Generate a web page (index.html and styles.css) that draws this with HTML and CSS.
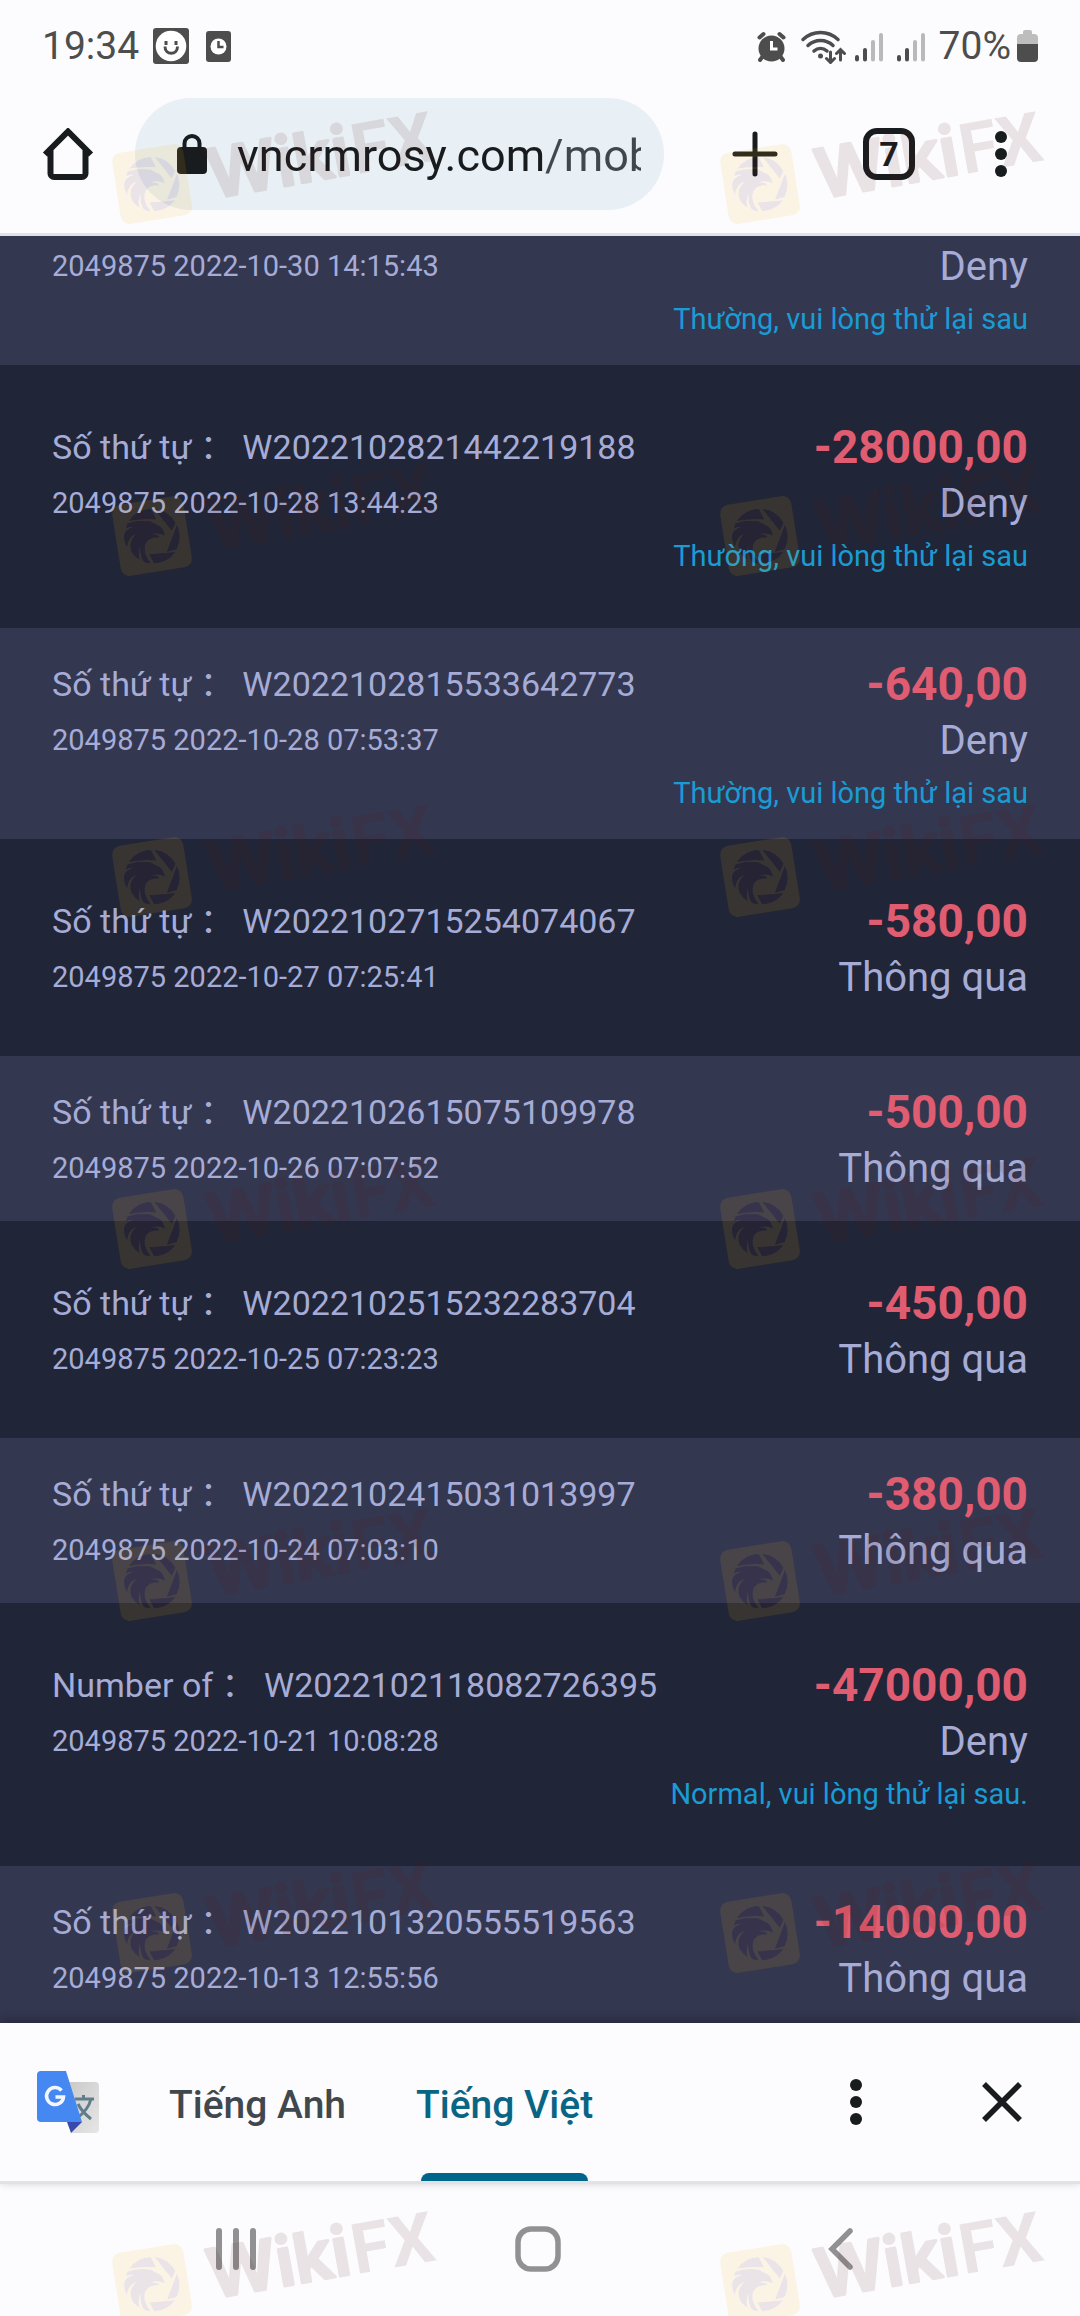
FILE: index.html
```html
<!DOCTYPE html>
<html lang="vi">
<head>
<meta charset="utf-8">
<meta name="viewport" content="width=device-width, initial-scale=1">
<title>vncrmrosy.com</title>
<link rel="stylesheet" href="styles.css">
</head>
<body>
<header class="browser">
  <div class="status-bar">
    <span class="clock">19:34</span>
    <svg class="smile-icon" width="36" height="36" viewBox="0 0 36 36" aria-hidden="true">
      <rect width="36" height="36" rx="3" fill="#4d4d4d"/>
      <circle cx="18" cy="18" r="15.3" fill="#fff"/>
      <path d="M13 13v4M23 13v4" stroke="#4d4d4d" stroke-width="3"/>
      <path d="M12 18.500c0 9 12.500 9 12.500 0" fill="none" stroke="#4d4d4d" stroke-width="3"/>
    </svg>
    <svg class="card-icon" width="25" height="31" viewBox="0 0 25 31" aria-hidden="true">
      <rect width="25" height="31" rx="3" fill="#4d4d4d"/>
      <circle cx="12.500" cy="15.500" r="8" fill="#fff"/>
      <path d="M12.500 10v6h5" fill="none" stroke="#4d4d4d" stroke-width="2.500"/>
    </svg>
    <svg class="system-icons" width="126" height="36" viewBox="0 0 126 36" aria-hidden="true">
      <g fill="none" stroke="#4d4d4d" stroke-width="4" stroke-linecap="round">
        <path d="M2.500 9.500l4-3.500M26.500 9.500l-4-3.500M6 28l-3 4M23 28l3 4"/>
      </g>
      <circle cx="14.500" cy="20.500" r="13" fill="#4d4d4d"/>
      <path d="M14.500 13v8h6" fill="none" stroke="#fff" stroke-width="3"/>
      <g fill="none" stroke="#4d4d4d" stroke-width="3.500" stroke-linecap="round">
        <path d="M46 11.500c10-9.300 25-9.300 35 0M51 17.500c7-6.700 18-6.700 25 0M57 23c4-3.500 9-3.500 13 0"/>
        <path stroke-width="3" d="M73.500 24v10M69.500 30.500l4 4 4-4M83.500 32v-10M79.500 25.500l4-4 4 4"/>
      </g>
      <circle cx="63.500" cy="28" r="2.500" fill="#4d4d4d"/>
      <g stroke-width="4" stroke-linecap="round">
        <path stroke="#4d4d4d" d="M100 29v2.500M108 22v9.500"/>
        <path stroke="#b9b9b9" d="M116 14v17.500M124 7v24.500"/>
      </g>
    </svg>
    <svg class="signal-icon" width="28" height="36" viewBox="98 0 28 36" aria-hidden="true">
      <g stroke-width="4" stroke-linecap="round">
        <path stroke="#4d4d4d" d="M100 29v2.500M108 22v9.500"/>
        <path stroke="#b9b9b9" d="M116 14v17.500M124 7v24.500"/>
      </g>
    </svg>
    <span class="battery-level">70%</span>
    <svg class="battery-icon" width="21" height="32" viewBox="0 0 21 32" aria-hidden="true">
      <path d="M6 2a2 2 0 0 1 2-2h5a2 2 0 0 1 2 2v2h2a4 4 0 0 1 4 4v6H0V8a4 4 0 0 1 4-4h2z" fill="#bdbdbd"/>
      <path d="M0 14h21v14a4 4 0 0 1-4 4H4a4 4 0 0 1-4-4z" fill="#4d4d4d"/>
    </svg>
  </div>
  <div class="toolbar">
    <button class="icon-button" type="button" aria-label="Home">
      <svg width="52" height="52" viewBox="0 0 52 52"><path d="M3 26.500L26 3.500l23 23M8.500 22v23.500a3.500 3.500 0 0 0 3.500 3.500h28a3.500 3.500 0 0 0 3.500-3.500V22" fill="none" stroke="#191c1e" stroke-width="6"/></svg>
    </button>
    <div class="address">
      <svg width="30" height="40" viewBox="0 0 30 40" aria-hidden="true"><rect y="13" width="30" height="27" rx="4" fill="#191c1e"/><path d="M7.500 15V9.500a7.500 7.500 0 0 1 15 0V15" fill="none" stroke="#191c1e" stroke-width="4"/></svg>
      <input class="address-input" type="text" aria-label="Address" value="vncrmrosy.com/mob">
    </div>
    <button class="icon-button new-tab" type="button" aria-label="New tab">
      <svg width="46" height="46" viewBox="0 0 46 46"><path d="M23 3v40M3 23h40" stroke="#191c1e" stroke-width="5" stroke-linecap="round"/></svg>
    </button>
    <button class="tab-count" type="button">7</button>
    <button class="icon-button" type="button" aria-label="Menu">
      <svg width="12" height="46" viewBox="0 0 12 46" fill="#191c1e"><circle cx="6" cy="6" r="6"/><circle cx="6" cy="23" r="6"/><circle cx="6" cy="40" r="6"/></svg>
    </button>
  </div>
</header>

<main class="page">
  <ul class="records">
    <li class="record record-cut">
      <div class="info"><span class="date">2049875 2022-10-30 14:15:43</span></div>
      <div class="result"><span class="state">Deny</span><span class="reason">Thường, vui lòng thử lại sau</span></div>
    </li>
    <li class="record">
      <div class="info"><span class="order">Số thứ tự ： W2022102821442219188</span><span class="date">2049875 2022-10-28 13:44:23</span></div>
      <div class="result"><strong class="amount">-28000,00</strong><span class="state">Deny</span><span class="reason">Thường, vui lòng thử lại sau</span></div>
    </li>
    <li class="record">
      <div class="info"><span class="order">Số thứ tự ： W2022102815533642773</span><span class="date">2049875 2022-10-28 07:53:37</span></div>
      <div class="result"><strong class="amount">-640,00</strong><span class="state">Deny</span><span class="reason">Thường, vui lòng thử lại sau</span></div>
    </li>
    <li class="record">
      <div class="info"><span class="order">Số thứ tự ： W2022102715254074067</span><span class="date">2049875 2022-10-27 07:25:41</span></div>
      <div class="result"><strong class="amount">-580,00</strong><span class="state">Thông qua</span></div>
    </li>
    <li class="record">
      <div class="info"><span class="order">Số thứ tự ： W2022102615075109978</span><span class="date">2049875 2022-10-26 07:07:52</span></div>
      <div class="result"><strong class="amount">-500,00</strong><span class="state">Thông qua</span></div>
    </li>
    <li class="record">
      <div class="info"><span class="order">Số thứ tự ： W2022102515232283704</span><span class="date">2049875 2022-10-25 07:23:23</span></div>
      <div class="result"><strong class="amount">-450,00</strong><span class="state">Thông qua</span></div>
    </li>
    <li class="record">
      <div class="info"><span class="order">Số thứ tự ： W2022102415031013997</span><span class="date">2049875 2022-10-24 07:03:10</span></div>
      <div class="result"><strong class="amount">-380,00</strong><span class="state">Thông qua</span></div>
    </li>
    <li class="record">
      <div class="info"><span class="order">Number of ： W2022102118082726395</span><span class="date">2049875 2022-10-21 10:08:28</span></div>
      <div class="result"><strong class="amount">-47000,00</strong><span class="state">Deny</span><span class="reason">Normal, vui lòng thử lại sau.</span></div>
    </li>
    <li class="record">
      <div class="info"><span class="order">Số thứ tự ： W2022101320555519563</span><span class="date">2049875 2022-10-13 12:55:56</span></div>
      <div class="result"><strong class="amount">-14000,00</strong><span class="state">Thông qua</span></div>
    </li>
  </ul>
</main>

<section class="translate">
  <svg class="translate-logo" width="62" height="62" viewBox="0 0 62 62" aria-hidden="true">
    <defs>
      <linearGradient id="sheet" x1="0" y1="0" x2="1" y2="1"><stop offset="0" stop-color="#c9c9c9"/><stop offset="1" stop-color="#e6e6e6"/></linearGradient>
    </defs>
    <path d="M30 11h28a4 4 0 0 1 4 4v43a4 4 0 0 1-4 4H34z" fill="url(#sheet)"/>
    <path d="M38 28h19M46.500 24v4M54 28c-2 8-7 14-14 19M41 33c3 6 8 11 13 15" fill="none" stroke="#607d8b" stroke-width="3"/>
    <path d="M30 51h15L34 62z" fill="#3949ab"/>
    <path d="M4 0h25l16 51H4a4 4 0 0 1-4-4V4a4 4 0 0 1 4-4z" fill="#4688f1"/>
    <path d="M24.500 19.500a8.500 8.500 0 1 0 2 6.500h-8" fill="none" stroke="#f2f6ff" stroke-width="3.500"/>
  </svg>
  <div class="languages" role="tablist">
    <button class="language" type="button" role="tab" aria-selected="false">Tiếng Anh</button>
    <button class="language language-active" type="button" role="tab" aria-selected="true">Tiếng Việt</button>
  </div>
  <button class="icon-button" type="button" aria-label="Options">
    <svg width="12" height="46" viewBox="0 0 12 46" fill="#191c1e"><circle cx="6" cy="6" r="6"/><circle cx="6" cy="23" r="6"/><circle cx="6" cy="40" r="6"/></svg>
  </button>
  <button class="icon-button close" type="button" aria-label="Close">
    <svg width="40" height="40" viewBox="0 0 40 40"><path d="M2 2l36 36M38 2L2 38" stroke="#191c1e" stroke-width="5.500"/></svg>
  </button>
</section>

<nav class="system-nav">
  <button class="icon-button" type="button" aria-label="Recent apps">
    <svg width="40" height="44" viewBox="0 0 40 44"><path d="M3 4v36M20 4v36M37 4v36" stroke="#919193" stroke-width="6" stroke-linecap="round"/></svg>
  </button>
  <button class="icon-button" type="button" aria-label="Home screen">
    <svg width="46" height="46" viewBox="0 0 46 46"><rect x="3" y="3" width="40" height="40" rx="13" fill="none" stroke="#919193" stroke-width="5.500"/></svg>
  </button>
  <button class="icon-button" type="button" aria-label="Back">
    <svg width="34" height="44" viewBox="-8 0 34 44"><path d="M22 4L4 22l18 18" fill="none" stroke="#919193" stroke-width="5.500" stroke-linecap="round"/></svg>
  </button>
</nav>

<svg class="watermarks" aria-hidden="true">
  <defs>
    <g id="eagle">
      <path d="M17.300 24.700A27.300 27.300 0 0 1 38.700 13L44 23.300Q30 22 17.300 24.700z"/>
      <path d="M42.700 13A27.300 27.300 0 0 1 63.300 26.700L59.700 34.500z"/>
      <path d="M65 29.500A27.300 27.300 0 0 1 64.500 53L55 55.700z"/>
      <path d="M63 56.300A27.300 27.300 0 0 1 42.300 67.200L37.500 58.500z"/>
      <path d="M15.500 27.500C24 24.500 32 24.500 38 25.500C40 26 42 28 45 29C50 31 52 35 52.500 39.500C48 37 43 36.500 39 38.500C46 38.500 47 40 47 41.500C39 40.500 33 45 32.500 51C32 58 35 62 38.500 67.300C35 67 33 66 31.500 65C29 61 28 56 28.500 50C26 55 26.500 60 27.500 63.500C20 59 17.500 53 19 46C21 41 23 39 25 37.500C19 39 15.500 45 15 51C10.500 43 12 35 15.500 34C18 32 20 31.500 22 31C19 30.500 16 31 14 32.500z"/>
    </g>
    <mask id="badge-mask"><rect width="84" height="84" fill="#fff"/><use href="#eagle" fill="#000"/><path d="M32 34q4 2 8-1l-1 3q-4 1-7-2z" fill="#fff"/></mask>
    <g id="mark">
      <g mask="url(#badge-mask)"><rect x="4" y="4" width="72" height="72" rx="9" transform="rotate(-9 40 40)" fill="#f5b60a"/></g>
      <use href="#eagle" fill="#5a2030"/>
      <g transform="translate(104 55) rotate(-10)" fill="#5a2014">
        <text class="mark-text mark-round" x="-4" y="-1">Wiki</text>
        <text class="mark-text" x="142" y="0">FX</text>
      </g>
    </g>
  </defs>
  <g opacity="0.110">
    <use href="#mark" x="112" y="144"/><use href="#mark" x="720" y="144"/>
    <use href="#mark" x="112" y="496"/><use href="#mark" x="720" y="496"/>
    <use href="#mark" x="112" y="837"/><use href="#mark" x="720" y="837"/>
    <use href="#mark" x="112" y="1189"/><use href="#mark" x="720" y="1189"/>
    <use href="#mark" x="112" y="1541"/><use href="#mark" x="720" y="1541"/>
    <use href="#mark" x="112" y="1893"/><use href="#mark" x="720" y="1893"/>
    <use href="#mark" x="112" y="2244"/><use href="#mark" x="720" y="2244"/>
  </g>
</svg>
</body>
</html>
```

FILE: styles.css
```css
* {
  box-sizing: border-box;
}

body {
  margin: 0;
  height: 100vh;
  display: flex;
  flex-direction: column;
  overflow: hidden;
  position: relative;
  background: #fcfcff;
  font-family: Roboto, "Noto Sans CJK SC", sans-serif;
}

svg {
  display: block;
  flex: none;
}

button,
input {
  border: 0;
  padding: 0;
  margin: 0;
  background: none;
  font-family: inherit;
}

.icon-button {
  flex: none;
}

/* Browser chrome */
.browser {
  flex: none;
  border-bottom: 3px solid #dde3ea;
}

.status-bar {
  display: flex;
  align-items: center;
  height: 92px;
  padding: 0 42px;
  color: #4d4d4d;
  font-size: 39px;
  line-height: 48px;
}

.smile-icon {
  margin-left: 14px;
}

.card-icon {
  margin-left: 17px;
}

.system-icons {
  margin-left: auto;
}

.signal-icon {
  margin-left: 14px;
}

.battery-level {
  margin-left: 14px;
}

.battery-icon {
  margin-left: 6px;
}

.toolbar {
  display: flex;
  align-items: center;
  padding: 6px 73px 23px 42px;
}

.address {
  flex: 1;
  min-width: 0;
  display: flex;
  align-items: center;
  gap: 30px;
  height: 112px;
  margin: 0 68px 0 41px;
  padding: 0 23px 0 42px;
  border-radius: 56px;
  background: #e8eff5;
}

.address-input {
  flex: 1;
  min-width: 0;
  height: 68px;
  padding-top: 2px;
  font-size: 45px;
  line-height: 66px;
  color: transparent;
  background: linear-gradient(90deg, #191c1e 305px, #40484c 305px);
  background-clip: text;
  -webkit-background-clip: text;
}

.new-tab {
  margin-right: 85px;
}

.tab-count {
  flex: none;
  width: 52px;
  height: 52px;
  margin-right: 80px;
  border: 6px solid #191c1e;
  border-radius: 14px;
  color: #191c1e;
  font-size: 34px;
  font-weight: 700;
  line-height: 40px;
  text-align: center;
}

/* Records */
.page {
  flex: 1;
  min-height: 0;
  overflow: hidden;
  background: #202537;
}

.records {
  margin: 0;
  padding: 0;
  list-style: none;
}

.record {
  display: flex;
  justify-content: space-between;
  padding: 29px 52px 23px;
  background: #343750;
  color: #a6acd6;
  white-space: nowrap;
}

.record:nth-child(even) {
  margin: 26px 0;
  background: none;
}

.record-cut {
  padding-top: 1px;
}

.info,
.result {
  display: flex;
  flex-direction: column;
}

.result {
  align-items: flex-end;
}

.order {
  font-size: 34px;
  line-height: 54px;
}

.date {
  font-size: 29px;
  line-height: 58px;
}

.amount {
  color: #e05c70;
  font-size: 46px;
  line-height: 54px;
}

.state {
  padding-top: 1px;
  font-size: 40px;
  line-height: 58px;
}

.reason {
  color: #1a9bd4;
  font-size: 29px;
  line-height: 46px;
}

/* Translate bar */
.translate {
  flex: none;
  display: flex;
  align-items: center;
  height: 161px;
  padding: 0 58px 0 37px;
  border-bottom: 3px solid #dfe3e8;
  background: #fcfcff;
  box-shadow: 0 -3px 10px rgba(0, 0, 0, 0.3);
}

.languages {
  flex: 1;
  align-self: stretch;
  display: flex;
  gap: 70px;
  margin-left: 70px;
}

.language {
  position: relative;
  padding-top: 6px;
  color: #41484d;
  font-size: 39px;
  font-weight: 500;
  line-height: 48px;
}

.language-active {
  color: #0a6484;
}

.language-active::after {
  content: "";
  position: absolute;
  left: 5px;
  right: 5px;
  bottom: 0;
  height: 8px;
  border-radius: 8px 8px 0 0;
  background: #00658a;
}

.close {
  margin-left: 120px;
}

/* System navigation */
.system-nav {
  flex: none;
  display: flex;
  align-items: center;
  justify-content: space-between;
  height: 132px;
  padding: 0 226px 2px 216px;
}

.watermarks {
  position: absolute;
  inset: 0;
  width: 100%;
  height: 100%;
  pointer-events: none;
}

.mark-text {
  font-size: 70px;
  font-weight: 700;
}

.mark-round {
  font-family: Inter, sans-serif;
  font-size: 68px;
  font-weight: 600;
  stroke: #5a2014;
  stroke-width: 3px;
  stroke-linejoin: round;
}
```
